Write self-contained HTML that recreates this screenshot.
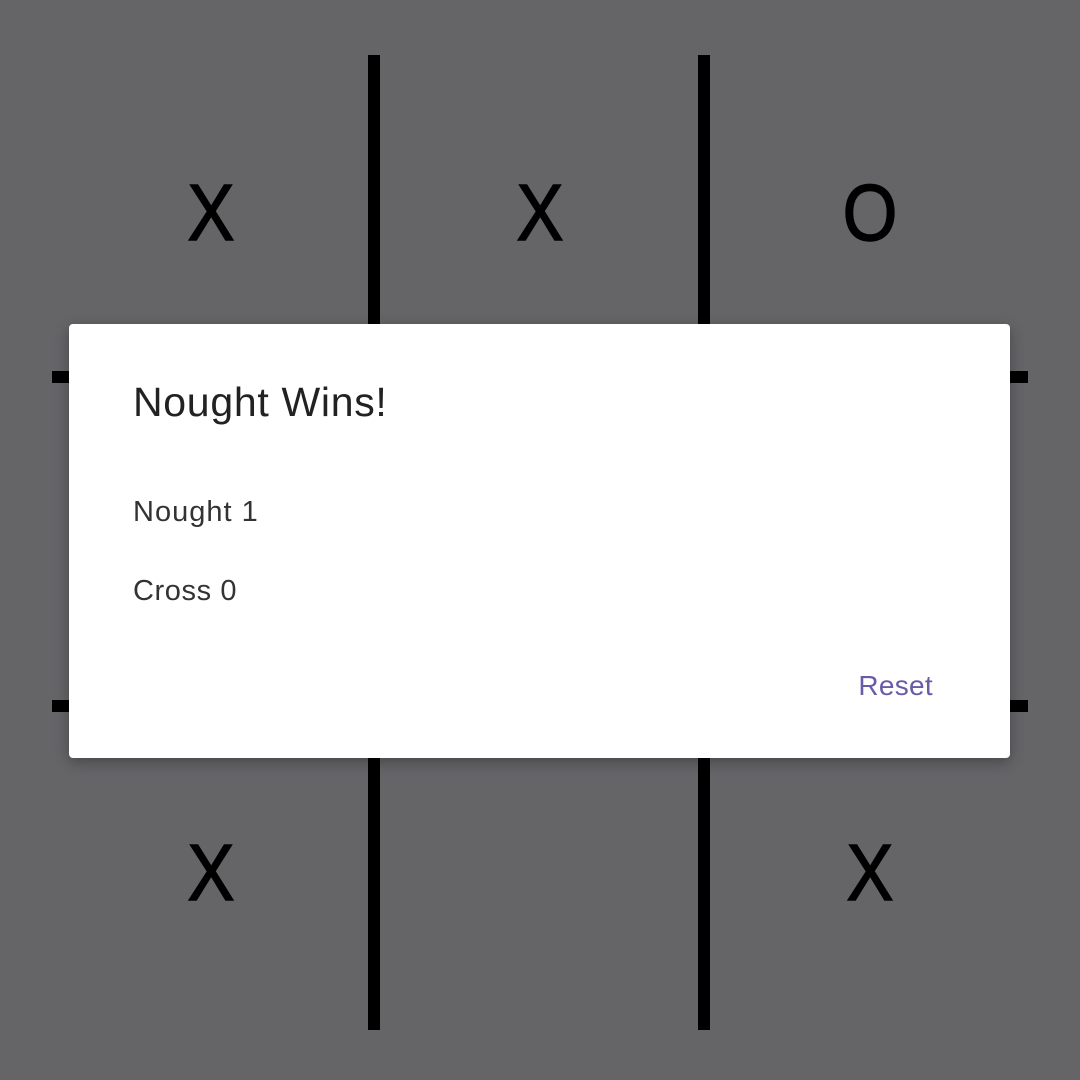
<!DOCTYPE html>
<html><head><style>
html,body{margin:0;padding:0}
body{width:1080px;height:1080px;background:#656467;position:relative;overflow:hidden;font-family:"Liberation Sans",sans-serif}
.l{position:absolute;background:#000}
.m{position:absolute;width:120px;text-align:center;font-size:80px;line-height:1;color:#000;transform:scaleX(0.88);-webkit-text-stroke:1.5px #000}
.d{position:absolute;left:69px;top:324px;width:941px;height:434px;background:#fff;border-radius:4px;box-shadow:0 4px 14px rgba(0,0,0,.3)}
.t{position:absolute;line-height:1;color:#222;white-space:nowrap}
</style></head><body>
<div class="l" style="left:368px;top:55px;width:12px;height:975px"></div>
<div class="l" style="left:698px;top:55px;width:12px;height:975px"></div>
<div class="l" style="left:52px;top:371px;width:976px;height:12px"></div>
<div class="l" style="left:52px;top:700px;width:976px;height:12px"></div>
<div class="m" style="left:151px;top:173px">X</div>
<div class="m" style="left:480px;top:173px">X</div>
<div class="m" style="left:810px;top:173px">O</div>
<div class="m" style="left:151px;top:833px">X</div>
<div class="m" style="left:810px;top:833px">X</div>
<div class="d"></div>
<div class="t" style="left:133px;top:382px;font-size:41px;letter-spacing:0.7px">Nought Wins!</div>
<div class="t" style="left:133px;top:498px;font-size:29px;color:#333;letter-spacing:1px">Nought 1</div>
<div class="t" style="left:133px;top:577px;font-size:29px;color:#333;letter-spacing:0.6px">Cross 0</div>
<div class="t" style="right:147px;top:672px;font-size:28px;color:#6b5aa8;letter-spacing:0.3px">Reset</div>
</body></html>
